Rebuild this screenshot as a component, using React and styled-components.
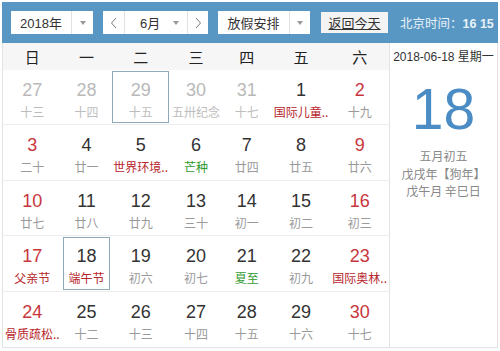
import React from 'react';
import styled, { createGlobalStyle } from 'styled-components';

const GlobalStyle = createGlobalStyle`
  body {
    margin: 0;
    background: #fff;
    font-family: "Liberation Sans", "Noto Sans CJK SC", sans-serif;
  }
`;

const Wrap = styled.div`
  margin: 2px 0 0 2px;
  width: 494px;
  height: 345px;
  border: 1px solid #e3e3e3;
  border-top: none;
  display: flex;
  flex-direction: column;
`;

const TopBar = styled.div`
  height: 41px;
  margin: 0 -1px;
  background: #5897c3;
  display: flex;
  align-items: center;
  padding: 0 0 0 9px;
  gap: 10px;
  overflow: hidden;
`;

const Select = styled.div`
  flex-shrink: 0;
  height: 23px;
  background: #fff;
  display: flex;
  align-items: stretch;
  font-size: 13px;
  color: #333;
`;

const Part = styled.div`
  width: ${p => p.w}px;
  display: flex;
  align-items: center;
  justify-content: ${p => p.left ? 'flex-start' : 'center'};
  padding-left: ${p => p.left ? '15px' : '0'};
  padding-right: ${p => p.left ? '8px' : '0'};
  box-sizing: border-box;
  border-left: ${p => p.divide ? '1px solid #e2e2e2' : 'none'};
`;

const Spacer = styled.span`
  flex: 1;
`;

const Caret = styled.span`
  width: 0;
  height: 0;
  border-left: 3px solid transparent;
  border-right: 3px solid transparent;
  border-top: 4px solid #999;
`;

const Chevron = styled.svg`
  width: 8px;
  height: 12px;
`;

const TodayBtn = styled.div`
  flex-shrink: 0;
  height: 21px;
  width: 67px;
  margin-left: 1px;
  background: #f3f3f3;
  display: flex;
  align-items: center;
  justify-content: center;
  font-size: 13px;
  color: #333;
  text-decoration: underline;
`;

const Clock = styled.div`
  flex-shrink: 0;
  margin-left: 2px;
  color: #e8f1f8;
  font-size: 12.5px;
  white-space: nowrap;
  b { font-weight: bold; }
`;

const Body = styled.div`
  flex: 1;
  display: flex;
`;

const Grid = styled.div`
  width: 386px;
  display: grid;
  grid-template-columns: repeat(7, 1fr);
  grid-template-rows: 27px repeat(5, 1fr);
`;

const Head = styled.div`
  background: #f6f6f6;
  display: flex;
  align-items: center;
  justify-content: center;
  font-size: 15px;
  color: #222;
  font-family: "Noto Sans CJK SC", sans-serif;
`;

const Cell = styled.div`
  border-bottom: ${p => p.last ? 'none' : '1px solid #ededed'};
  padding: 1px;
  display: flex;
`;

const Inner = styled.div`
  flex: 1;
  border: 1px solid ${p => p.sel ? '#8fa9b8' : 'transparent'};
  display: flex;
  flex-direction: column;
  align-items: center;
  padding-top: 7px;
  box-sizing: border-box;
`;

const Num = styled.div`
  font-size: 18px;
  line-height: 22px;
  color: ${p => p.dim ? '#b9b9b9' : p.red ? '#c8363d' : '#333'};
`;

const Lunar = styled.div`
  margin-top: 2px;
  font-size: 12px;
  line-height: 18px;
  white-space: nowrap;
  font-family: "Noto Sans CJK SC", sans-serif;
  color: ${p => p.tone === 'red' ? '#b7262c' : p.tone === 'green' ? '#2f9a2f' : p.dim ? '#bdbdbd' : '#9a9a9a'};
`;

const Side = styled.div`
  flex: 1;
  border-left: 1px solid #e3e3e3;
  display: flex;
  flex-direction: column;
  align-items: center;
  color: #888;
`;

const SideDate = styled.div`
  margin-top: 5px;
  font-size: 12px;
  color: #333;
  line-height: 18px;
  white-space: nowrap;
`;

const BigDay = styled.div`
  margin-top: 10px;
  margin-bottom: 5px;
  font-size: 57px;
  line-height: 66px;
  color: #4a8cc3;
`;

const SideLine = styled.div`
  font-size: 12px;
  line-height: 17.5px;
  font-family: "Noto Sans CJK SC", sans-serif;
  color: #888;
`;

const weekdays = ['日', '一', '二', '三', '四', '五', '六'];

const days = [
  [27, '十三', { dim: true }], [28, '十四', { dim: true }], [29, '十五', { dim: true, sel: true }], [30, '五卅纪念', { dim: true }], [31, '十七', { dim: true }], [1, '国际儿童..', { tone: 'red' }], [2, '十九', { red: true }],
  [3, '二十', { red: true }], [4, '廿一'], [5, '世界环境..', { tone: 'red' }], [6, '芒种', { tone: 'green' }], [7, '廿四'], [8, '廿五'], [9, '廿六', { red: true }],
  [10, '廿七', { red: true }], [11, '廿八'], [12, '廿九'], [13, '三十'], [14, '初一'], [15, '初二'], [16, '初三', { red: true }],
  [17, '父亲节', { red: true, tone: 'red' }], [18, '端午节', { sel: true, tone: 'red' }], [19, '初六'], [20, '初七'], [21, '夏至', { tone: 'green' }], [22, '初九'], [23, '国际奥林..', { red: true, tone: 'red' }],
  [24, '骨质疏松..', { red: true, tone: 'red' }], [25, '十二'], [26, '十三'], [27, '十四'], [28, '十五'], [29, '十六'], [30, '十七', { red: true }],
];

const Left = () => (
  <Chevron viewBox="0 0 8 12"><path d="M6 1 L1.5 6 L6 11" fill="none" stroke="#777" strokeWidth="1" /></Chevron>
);
const Right = () => (
  <Chevron viewBox="0 0 8 12"><path d="M2 1 L6.5 6 L2 11" fill="none" stroke="#777" strokeWidth="1" /></Chevron>
);

export default function App() {
  return (
    <>
      <GlobalStyle />
      <Wrap>
        <TopBar>
          <Select>
            <Part w={60}>2018年</Part>
            <Part w={22} divide><Caret /></Part>
          </Select>
          <Select>
            <Part w={21}><Left /></Part>
            <Part w={63} divide left>6月<Spacer /><Caret /></Part>
            <Part w={21} divide><Right /></Part>
          </Select>
          <Select>
            <Part w={71}>放假安排</Part>
            <Part w={21} divide><Caret /></Part>
          </Select>
          <TodayBtn>返回今天</TodayBtn>
          <Clock>北京时间：<b>16 15</b></Clock>
        </TopBar>
        <Body>
          <Grid>
            {weekdays.map(w => <Head key={w}>{w}</Head>)}
            {days.map(([n, l, o = {}], i) => (
              <Cell key={i} last={i >= 28}>
                <Inner sel={o.sel}>
                  <Num dim={o.dim} red={o.red}>{n}</Num>
                  <Lunar dim={o.dim} tone={o.tone}>{l}</Lunar>
                </Inner>
              </Cell>
            ))}
          </Grid>
          <Side>
            <SideDate>2018-06-18 星期一</SideDate>
            <BigDay>18</BigDay>
            <SideLine>五月初五</SideLine>
            <SideLine>戊戌年【狗年】</SideLine>
            <SideLine>戊午月 辛巳日</SideLine>
          </Side>
        </Body>
      </Wrap>
    </>
  );
}
